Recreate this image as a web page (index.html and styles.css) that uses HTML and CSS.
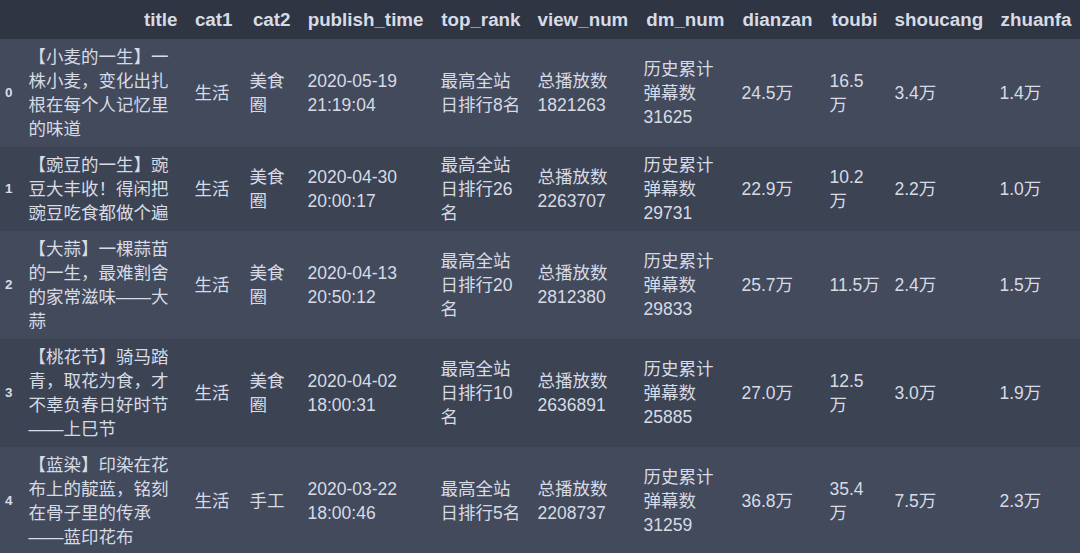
FILE: index.html
```html
<!DOCTYPE html>
<html lang="zh">
<head>
<meta charset="utf-8">
<link rel="stylesheet" href="styles.css">
</head>
<body>
<table class="df">
  <colgroup>
    <col class="c-idx"><col class="c-title"><col class="c-cat1"><col class="c-cat2"><col class="c-pub"><col class="c-rank"><col class="c-view"><col class="c-dm"><col class="c-dz"><col class="c-tb"><col class="c-sc"><col class="c-zf">
  </colgroup>
  <thead>
    <tr>
      <th></th><th>title</th><th>cat1</th><th>cat2</th><th>publish_time</th><th>top_rank</th><th>view_num</th><th>dm_num</th><th>dianzan</th><th>toubi</th><th>shoucang</th><th>zhuanfa</th>
    </tr>
  </thead>
  <tbody>
    <tr class="odd">
      <th>0</th>
      <td>【小麦的一生】一<br>株小麦，变化出扎<br>根在每个人记忆里<br>的味道</td>
      <td>生活</td><td>美食<br>圈</td><td>2020-05-19<br>21:19:04</td><td>最高全站<br>日排行8名</td><td>总播放数<br>1821263</td><td>历史累计<br>弹幕数<br>31625</td><td>24.5万</td><td>16.5<br>万</td><td>3.4万</td><td>1.4万</td>
    </tr>
    <tr class="even">
      <th>1</th>
      <td>【豌豆的一生】豌<br>豆大丰收！得闲把<br>豌豆吃食都做个遍</td>
      <td>生活</td><td>美食<br>圈</td><td>2020-04-30<br>20:00:17</td><td>最高全站<br>日排行26<br>名</td><td>总播放数<br>2263707</td><td>历史累计<br>弹幕数<br>29731</td><td>22.9万</td><td>10.2<br>万</td><td>2.2万</td><td>1.0万</td>
    </tr>
    <tr class="odd">
      <th>2</th>
      <td>【大蒜】一棵蒜苗<br>的一生，最难割舍<br>的家常滋味——大<br>蒜</td>
      <td>生活</td><td>美食<br>圈</td><td>2020-04-13<br>20:50:12</td><td>最高全站<br>日排行20<br>名</td><td>总播放数<br>2812380</td><td>历史累计<br>弹幕数<br>29833</td><td>25.7万</td><td>11.5万</td><td>2.4万</td><td>1.5万</td>
    </tr>
    <tr class="even">
      <th>3</th>
      <td>【桃花节】骑马踏<br>青，取花为食，才<br>不辜负春日好时节<br>——上巳节</td>
      <td>生活</td><td>美食<br>圈</td><td>2020-04-02<br>18:00:31</td><td>最高全站<br>日排行10<br>名</td><td>总播放数<br>2636891</td><td>历史累计<br>弹幕数<br>25885</td><td>27.0万</td><td>12.5<br>万</td><td>3.0万</td><td>1.9万</td>
    </tr>
    <tr class="odd">
      <th>4</th>
      <td>【蓝染】印染在花<br>布上的靛蓝，铭刻<br>在骨子里的传承<br>——蓝印花布</td>
      <td>生活</td><td>手工</td><td>2020-03-22<br>18:00:46</td><td>最高全站<br>日排行5名</td><td>总播放数<br>2208737</td><td>历史累计<br>弹幕数<br>31259</td><td>36.8万</td><td>35.4<br>万</td><td>7.5万</td><td>2.3万</td>
    </tr>
  </tbody>
</table>
</body>
</html>
```
FILE: styles.css
```css
html, body {
  margin: 0;
  padding: 0;
  background: #434a5b;
  overflow: hidden;
}

.df {
  width: 1080px;
  table-layout: fixed;
  border-collapse: collapse;
  border-spacing: 0;
  font-family: "Liberation Sans", "Noto Sans CJK SC", sans-serif;
  font-size: 17.5px;
  line-height: 24px;
  color: #d6dbe6;
}

.c-idx { width: 20px; }
.c-title { width: 166px; }
.c-cat1 { width: 55px; }
.c-cat2 { width: 58px; }
.c-pub { width: 133px; }
.c-rank { width: 97px; }
.c-view { width: 106px; }
.c-dm { width: 98px; }
.c-dz { width: 88px; }
.c-tb { width: 65px; }
.c-sc { width: 105px; }
.c-zf { width: 89px; }

.df thead tr {
  background: #2f3542;
}

.df thead th {
  height: 39px;
  padding: 0 8.5px;
  text-align: right;
  font-size: 18.8px;
  font-weight: bold;
  white-space: nowrap;
  vertical-align: middle;
}

.df tbody tr.odd { background: #434a5b; }
.df tbody tr.even { background: #3c4352; }

.df td {
  padding: 6px 8.5px;
  text-align: left;
  vertical-align: middle;
  white-space: nowrap;
}

.df tbody th {
  padding: 0 0 0 5px;
  text-align: left;
  font-size: 13.5px;
  font-weight: bold;
  vertical-align: middle;
}
```
